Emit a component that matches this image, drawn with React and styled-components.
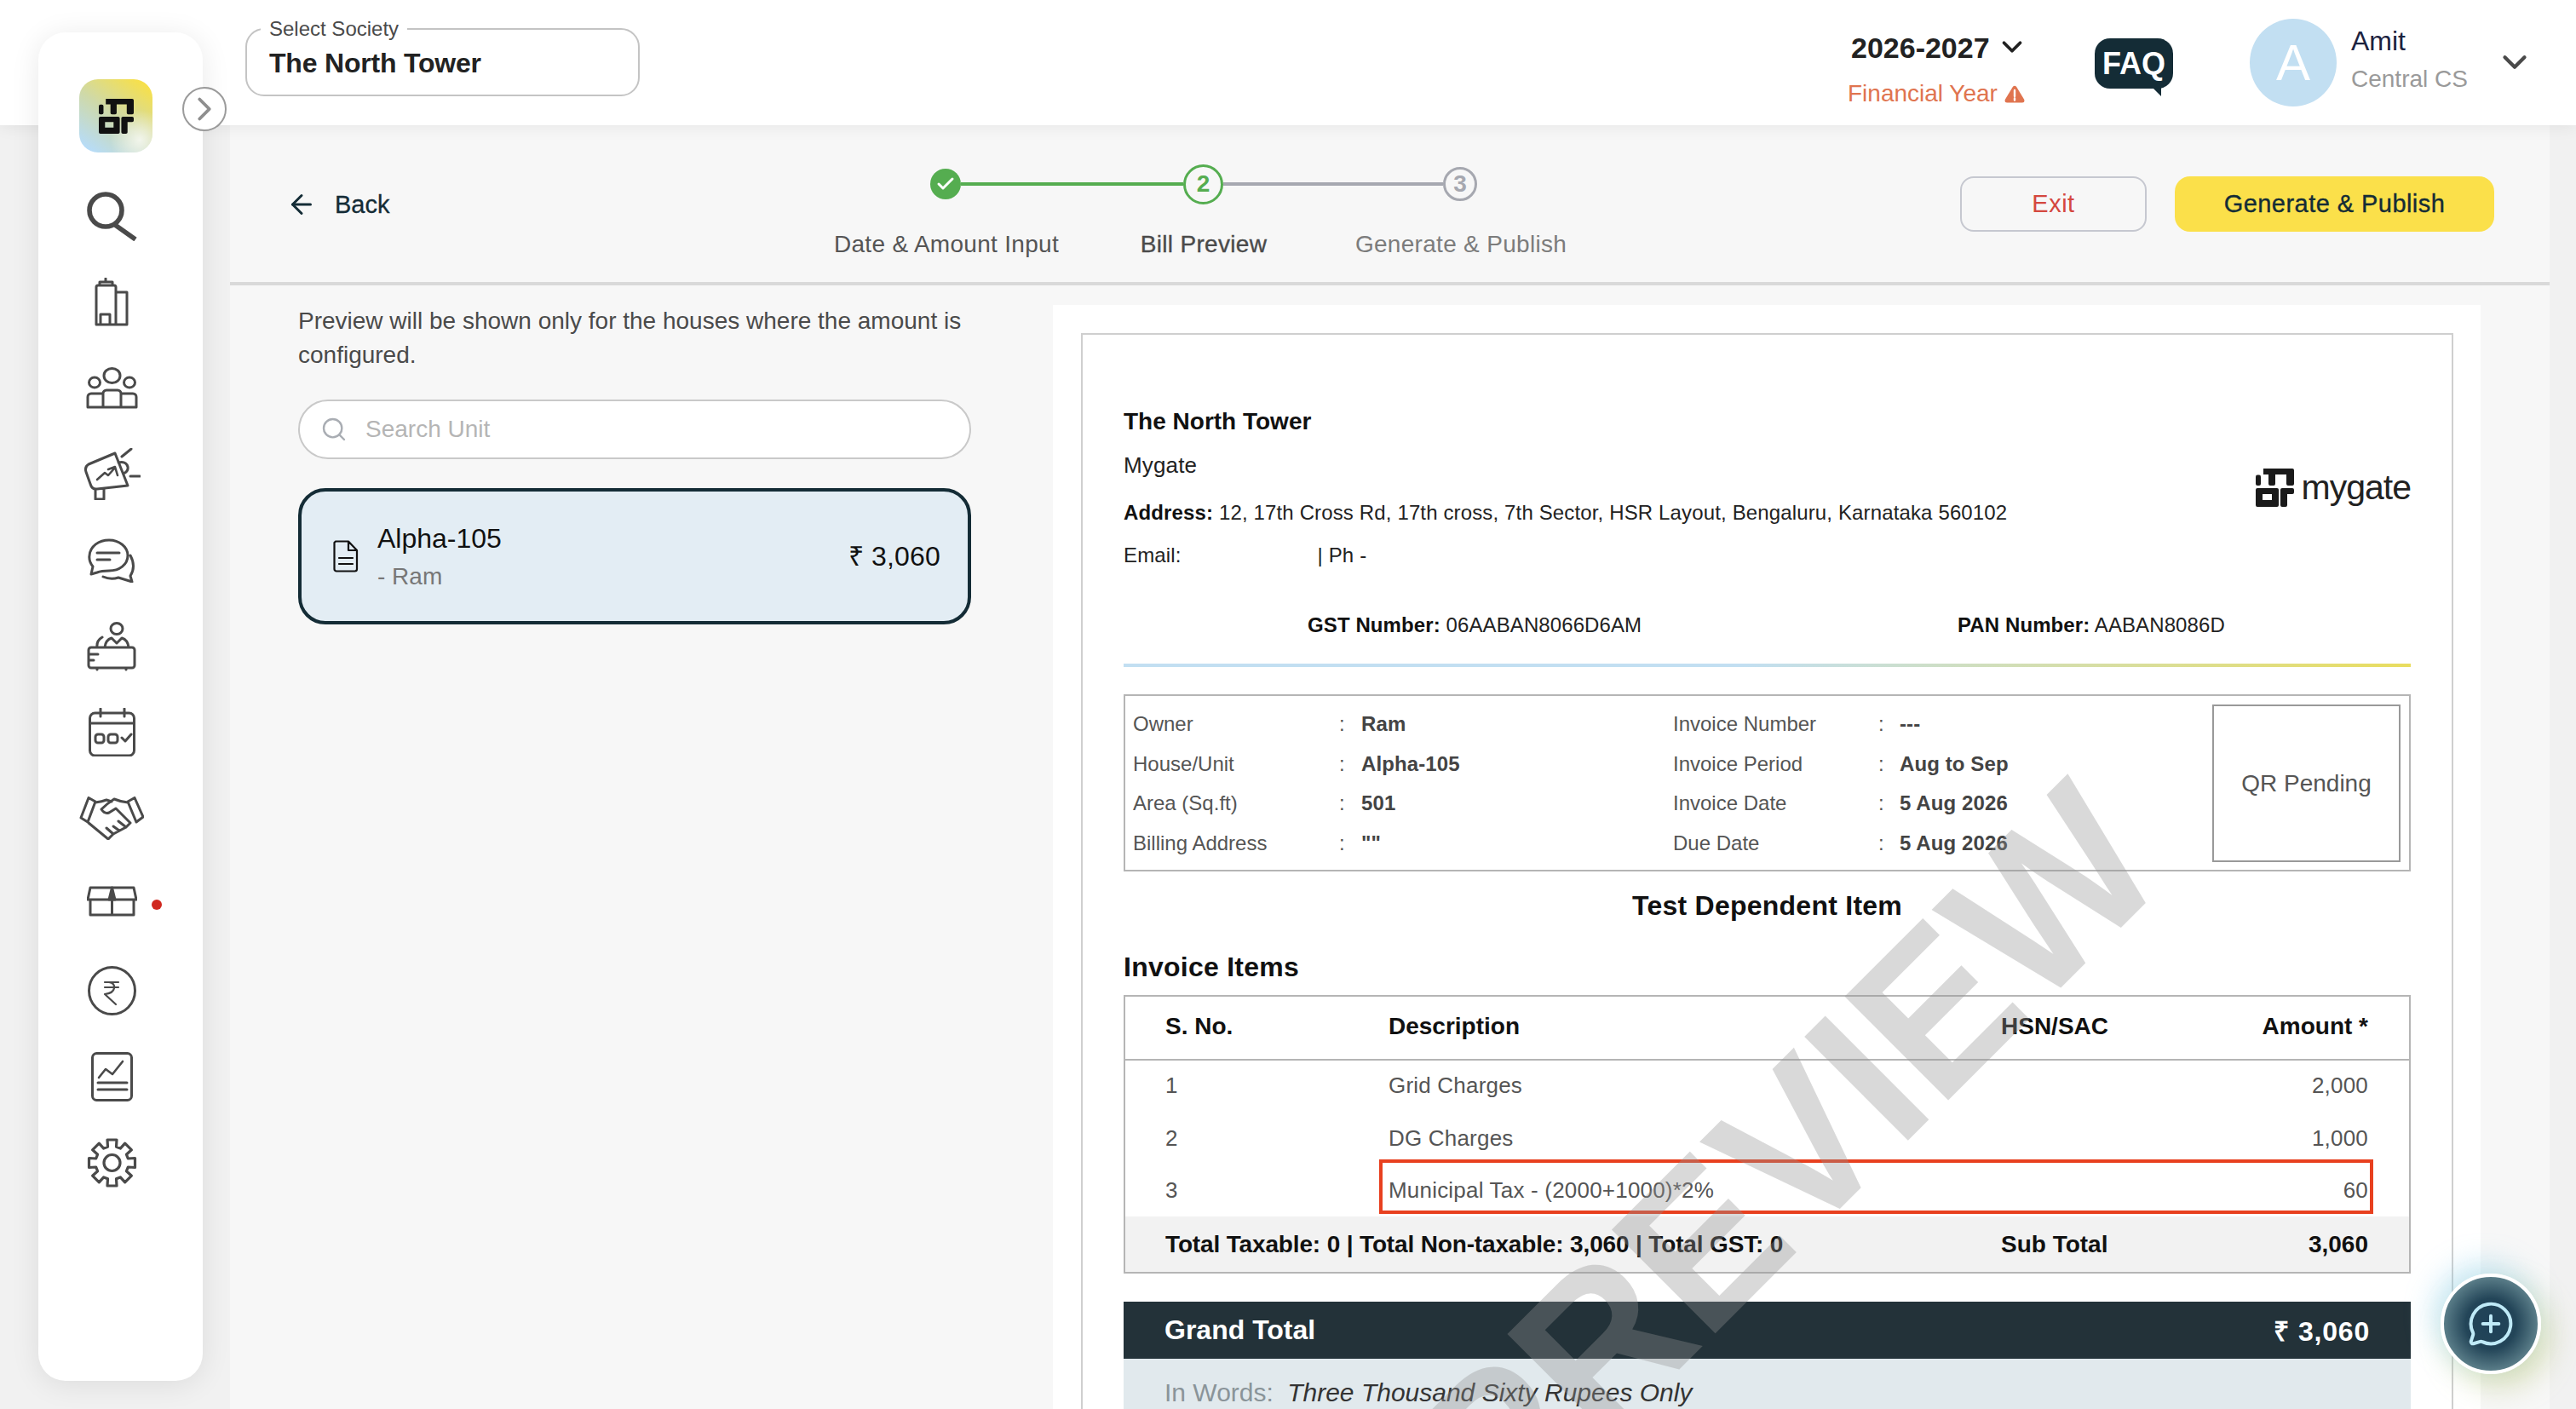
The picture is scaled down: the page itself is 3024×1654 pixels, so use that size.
import React from "react";
import styled, { createGlobalStyle } from "styled-components";
import { ArrowLeft, ChevronDown, ChevronRight, Check, Search, MessageCirclePlus } from "lucide-react";

const FONT = '"Liberation Sans", Arial, sans-serif';

const Global = createGlobalStyle`
  html, body { margin: 0; height: 100%; overflow: hidden; background: #f1f1f1; }
  #root { height: 100%; }
  * { box-sizing: border-box; }
`;

const Page = styled.div`
  position: relative; width: 100%; height: 100%; overflow: hidden;
  display: flex; flex-direction: column; font-family: ${FONT}; color: #222;
`;

/* ---------- sidebar ---------- */
const Sidebar = styled.nav`
  position: absolute; left: 45px; top: 38px; width: 193px; height: 1583px; z-index: 5;
  background: #fff; border-radius: 32px; box-shadow: 0 4px 34px rgba(0,0,0,.09);
  display: flex; flex-direction: column; padding: 55px 0 0 48px;
`;
const LogoTile = styled.div`
  width: 86px; height: 86px; border-radius: 22px; display: flex; align-items: center; justify-content: center;
  background: linear-gradient(35deg, #b7dcf7 8%, #cfd9a8 50%, #f7e04a 92%);
  position: relative; overflow: hidden; margin-bottom: 24px;
  &::after { content: ""; position: absolute; right: -20px; bottom: -20px; width: 70px; height: 70px; border-radius: 50%; background: radial-gradient(circle, rgba(255,255,255,.75), rgba(255,255,255,0) 70%); }
  svg { position: relative; z-index: 1; }
`;
const NavItem = styled.div`
  position: relative; width: 76px; height: 101px; display: flex; align-items: center; justify-content: center;
  color: #4a4a4a; padding-bottom: ${(p) => p.$lift || 0}px;
`;
const NavDot = styled.span`
  position: absolute; left: 85px; top: 45px; width: 12px; height: 12px; border-radius: 50%; background: #d0281f;
`;
const Toggle = styled.button`
  position: absolute; left: 214px; top: 102px; width: 52px; height: 52px; padding: 0; z-index: 6;
  border: 2px solid #9b9b9b; border-radius: 50%; background: #fff; color: #8e8e8e;
  display: flex; align-items: center; justify-content: center;
`;

const Ico = styled.svg`
  display: block; fill: none; stroke: currentColor; stroke-width: ${(p) => p.$w || 3}; stroke-linecap: round; stroke-linejoin: round;
`;

const gearPath = () => {
  const cx = 29.5, cy = 29, pts = [], n = 8;
  for (let i = 0; i < n; i++) {
    const a = (i / n) * Math.PI * 2 - Math.PI / 2;
    const w = 0.2, g = 0.26;
    [[27.5, -w], [27.5, w], [19.5, g], [19.5, Math.PI / 4 - g]].forEach(([r, d]) => {
      pts.push([cx + r * Math.cos(a + d), cy + r * Math.sin(a + d)]);
    });
  }
  return "M" + pts.map((p) => p[0].toFixed(1) + " " + p[1].toFixed(1)).join("L") + "Z";
};

const MarkSvg = ({ size, color = "#111" }) => (
  <svg width={size} height={size} viewBox="0 0 45 45" fill={color}>
    <rect x="0" y="7.5" width="6" height="12.5" rx="2" />
    <path d="M9 0H43a2 2 0 0 1 2 2V18a2 2 0 0 1-2 2H38a2 2 0 0 1-2-2V7H23V18a2 2 0 0 1-2 2H17a2 2 0 0 1-2-2V7H9Z" />
    <path fillRule="evenodd" d="M2 23H25a2 2 0 0 1 2 2V43a2 2 0 0 1-2 2H2a2 2 0 0 1-2-2V25a2 2 0 0 1 2-2ZM8 30V37H19V30Z" />
    <path d="M31 23H43a2 2 0 0 1 2 2V28a2 2 0 0 1-2 2H37V43a2 2 0 0 1-2 2H31a2 2 0 0 1-2-2V25a2 2 0 0 1 2-2Z" />
  </svg>
);

const navIcons = [
  <Ico key="s" width="59" height="58" viewBox="0 0 59 58" $w={5.6}>
    <circle cx="22" cy="22" r="19" /><path d="M33 39L57 56" strokeLinecap="butt" />
  </Ico>,
  <Ico key="b" width="40" height="57" viewBox="0 0 40 57">
    <path d="M2 55V11a2 2 0 0 1 2-2H23a2 2 0 0 1 2 2V55M25 17H38V55H2M6 9V5H21V9M13 5V1M7 55V43H18V55" />
  </Ico>,
  <Ico key="p" width="61" height="49" viewBox="0 0 61 49">
    <ellipse cx="30.500" cy="10" rx="9.500" ry="8.500" /><ellipse cx="10" cy="18" rx="6.500" ry="6" /><ellipse cx="51" cy="18" rx="6.500" ry="6" />
    <path d="M20 47V31a4 4 0 0 1 4-4H37a4 4 0 0 1 4 4V47M20 31H6a4 4 0 0 0-4 4V47H59V35a4 4 0 0 0-4-4H41" />
  </Ico>,
  <Ico key="m" width="67" height="61" viewBox="0 0 67 61">
    <path d="M37 6L6 19Q1 22 3 28L8 42Q10 49 16 48L52 44ZM41 17Q50 15 52 22Q53 27 47 30M14 49V60H24V48M45 10L56 1M55 33H66" />
    <path d="M16 37L25 29L29 32L37 23M29 25L37 22L40 32" strokeWidth="2.600" />
  </Ico>,
  <Ico key="c" width="56" height="52" viewBox="0 0 56 52">
    <path d="M4 42L6 33Q1 27 2 20C3 9 13 2 25 2C37 2 47 10 47 20C47 31 37 38 25 38Q16 38 11 40ZM11 17H37M11 25H26M18 45Q27 49 36 46L52 51L50 44Q57 33 50 20" />
  </Ico>,
  <Ico key="r" width="58" height="58" viewBox="0 0 58 58">
    <ellipse cx="35" cy="8" rx="7" ry="6.500" />
    <path d="M21 30Q22 21 29 19L35 25L41 19Q48 21 49 30M12 30Q11 22 18 18M5 30H53a3 3 0 0 1 3 3V51a3 3 0 0 1-3 3H5a3 3 0 0 1-3-3V33a3 3 0 0 1 3-3ZM2 38H13M2 45H8M12 55V56M46 55V56" />
  </Ico>,
  <Ico key="d" width="55" height="57" viewBox="0 0 55 57">
    <rect x="1.500" y="6" width="52" height="50" rx="6" /><path d="M1.500 18H53.500M14 1V10M42 1V10M39 35L43 39L50 31" />
    <rect x="8" y="31" width="10" height="10" rx="3" /><rect x="23" y="31" width="11" height="10" rx="3" />
  </Ico>,
  <Ico key="h" width="76" height="51" viewBox="0 0 76 51">
    <path d="M11 1.500L2 25L10 30L19 6ZM65 1.500L75 24L67 30L57 6ZM19 7Q27 6 32 4L38 6M57 7Q48 6 41 3Q33 8 26 15Q30 21 35 19L43 14L60 31L55 36L40 44L34 50L11 31M32 37L40 44M40 35L47 40M46 29L55 36" />
  </Ico>,
  <Ico key="x" width="59" height="36" viewBox="0 0 59 36">
    <path d="M4 2H55L58 16H1ZM4 16V34H55V16M29.500 2V34" /><path d="M29.500 2L26 16H33Z" fill="currentColor" />
  </Ico>,
  <Ico key="u" width="57" height="58" viewBox="0 0 57 58">
    <ellipse cx="28.500" cy="29" rx="27" ry="27.500" />
    <path d="M20 19H36M20 25H36M25 19Q32 20 31 26Q30 32 20 33L33 45" strokeWidth="2.200" />
  </Ico>,
  <Ico key="t" width="49" height="58" viewBox="0 0 49 58">
    <rect x="1.500" y="1.500" width="46" height="55" rx="5" />
    <path d="M9 30L17 20L25 26L37 11" strokeWidth="2.600" /><path d="M8 36H42M8 44H42" />
  </Ico>,
  <Ico key="g" width="59" height="58" viewBox="0 0 59 58" $w={3.2}>
    <path d={gearPath()} /><circle cx="29.500" cy="29" r="9.500" />
  </Ico>,
];

/* ---------- top bar ---------- */
const TopBar = styled.header`
  flex: none; height: 147px; background: #fff; position: relative; z-index: 2;
  box-shadow: 0 2px 18px rgba(0,0,0,.07);
  display: flex; align-items: flex-start; padding: 0 49px 0 288px;
`;
const SocietyField = styled.fieldset`
  margin: 24px 0 0; padding: 0 0 0 26px; width: 463px; height: 89px; border: 2px solid #c4c4c4; border-radius: 22px;
  legend { margin-left: -10px; padding: 0 10px; font-size: 24px; color: #4a4a4a; line-height: 20px; }
`;
const SocietyName = styled.div`
  font-size: 32px; font-weight: 700; color: #222; margin-top: 8px; line-height: 44px; letter-spacing: -.2px;
`;
const YearBlock = styled.div`
  margin-left: auto; width: 214px; padding-top: 38px; display: flex; flex-direction: column;
`;
const YearRow = styled.div`
  display: flex; align-items: flex-start; gap: 7px; padding-left: 4px; font-size: 34px; font-weight: 700; line-height: 36px; color: #222; height: 36px;
`;
const YearCaret = styled(ChevronDown)`margin-top: -2px; flex: none;`;
const YearHint = styled.div`
  display: flex; align-items: center; gap: 8px; margin-top: 19px; font-size: 28px; line-height: 34px; color: #e0744f; white-space: nowrap;
`;
const FaqBubble = styled.div`
  position: relative; margin: 45px 0 0 76px; width: 92px; height: 59px; border-radius: 18px; background: #142c36;
  color: #fff; font-size: 36px; font-weight: 700; display: flex; align-items: center; justify-content: center;
  &::after { content: ""; position: absolute; right: 14px; bottom: -9px; border-top: 10px solid #142c36; border-left: 10px solid transparent; }
`;
const Avatar = styled.div`
  margin: 22px 0 0 90px; width: 102px; height: 103px; border-radius: 50%; background: #c2dff2; color: #fff;
  font-size: 60px; display: flex; align-items: center; justify-content: center;
`;
const UserBlock = styled.div`
  margin: 29px 0 0 17px; width: 161px;
`;
const UserName = styled.div`font-size: 32px; line-height: 38px; color: #1c2340;`;
const UserRole = styled.div`font-size: 28px; line-height: 34px; margin-top: 9px; color: #9a9a9a;`;
const UserCaret = styled.div`margin: 50px 0 0 8px; color: #4a4a4a; display: flex;`;

/* ---------- main ---------- */
const Shell = styled.div`
  flex: 1; min-height: 0; padding: 0 31px 0 270px; display: flex;
`;
const Main = styled.main`
  flex: 1; min-width: 0; background: #f7f7f7; display: flex; flex-direction: column;
`;
const ActionBar = styled.div`
  flex: none; height: 188px; border-bottom: 4px solid #d9d9d9; display: flex; align-items: flex-start; position: relative; padding-left: 66px;
`;
const BackLink = styled.div`
  width: 624px; margin-top: 73px; display: flex; align-items: center; gap: 21px; font-size: 29px; line-height: 40px; color: #142c36;
  -webkit-text-stroke: .3px #142c36;
`;
const Stepper = styled.div`
  width: 906px; display: flex; flex-direction: column; align-items: center; margin-top: 44px;
`;
const Track = styled.div`
  display: flex; align-items: center; height: 50px;
`;
const Dot = styled.div`
  flex: none; width: ${(p) => p.$size}px; height: ${(p) => p.$size}px; border-radius: 50%;
  border: ${(p) => (p.$filled ? "0" : "3px solid " + p.$color)};
  background: ${(p) => (p.$filled ? p.$color : "transparent")};
  color: ${(p) => (p.$filled ? "#fff" : p.$color)};
  display: flex; align-items: center; justify-content: center; font-size: 28px; font-weight: 700;
`;
const Bar = styled.div`
  flex: none; width: ${(p) => p.$w}px; height: 4px; background: ${(p) => p.$color};
`;
const StepLabels = styled.div`
  display: grid; grid-template-columns: repeat(3, 302px); margin-top: 28px; text-align: center;
`;
const StepLabel = styled.div`
  font-size: 28px; line-height: 36px; white-space: nowrap; letter-spacing: .3px; color: ${(p) => p.$color};
  -webkit-text-stroke: ${(p) => (p.$medium ? ".35px " + p.$color : "0")};
`;
const Actions = styled.div`
  margin-left: auto; margin-right: 65px; margin-top: 60px; display: flex; gap: 33px;
`;
const ExitButton = styled.button`
  width: 219px; height: 65px; border: 2px solid #c6c8d0; border-radius: 16px; background: transparent;
  color: #d4483f; font: 29px ${FONT}; letter-spacing: .5px;
`;
const PublishButton = styled.button`
  width: 375px; height: 65px; border: 0; border-radius: 18px; background: #fbe04a; color: #142c36; font: 29px ${FONT}; letter-spacing: .45px;
  -webkit-text-stroke: .35px #142c36;
`;

const Columns = styled.div`
  flex: 1; min-height: 0; display: flex; align-items: flex-start; padding: 0 81px 0 80px; gap: 96px;
`;
const LeftPane = styled.section`
  width: 790px; flex: none; padding-top: 22px;
`;
const Note = styled.p`
  margin: 0; font-size: 28px; line-height: 40px; color: #4a4a4a;
`;
const SearchBox = styled.div`
  margin-top: 32px; height: 70px; border: 2px solid #c9c9c9; border-radius: 35px; background: #fff;
  display: flex; align-items: center; gap: 21px; padding-left: 24px; color: #a9adb3; font-size: 28px;
  span { color: #b5b5b5; }
`;
const UnitCard = styled.div`
  margin-top: 34px; height: 160px; border: 4px solid #142c36; border-radius: 32px; background: #e3edf4;
  display: flex; align-items: center; padding: 0 32px 0 37px; gap: 22px;
`;
const UnitText = styled.div`flex: 1;`;
const UnitName = styled.div`font-size: 32px; line-height: 40px; color: #111;`;
const UnitOwner = styled.div`font-size: 28px; line-height: 36px; margin-top: 7px; color: #777;`;
const UnitAmount = styled.div`font-size: 32px; color: #111; padding-bottom: 3px; letter-spacing: .2px;`;

/* ---------- invoice ---------- */
const InvoicePane = styled.section`
  flex: 1; align-self: stretch; min-width: 0; margin-top: 23px; padding: 33px 32px 0 33px; background: #fff; overflow: hidden;
`;
const Sheet = styled.article`
  position: relative; height: 1850px; border: 2px solid #cfcfcf; padding: 82px 48px 0;
`;
const Letterhead = styled.div`display: flex; justify-content: space-between; align-items: flex-start;`;
const OrgName = styled.div`font-size: 28px; font-weight: 700; line-height: 40px; color: #111;`;
const OrgLine = styled.div`
  font-size: ${(p) => p.$size || 24}px; line-height: 40px; margin-top: ${(p) => p.$mt}px; color: #222; white-space: nowrap; letter-spacing: .14px;
  b { color: #111; }
`;
const EmailGap = styled.span`display: inline-block; width: 160px;`;
const Brand = styled.div`
  margin-top: 75px; display: flex; align-items: center; gap: 9px; height: 45px;
`;
const BrandWord = styled.span`font-size: 41px; line-height: 45px; color: #222; letter-spacing: -1px;`;
const TaxRow = styled.div`
  margin-top: 42px; padding-left: 216px; display: grid; grid-template-columns: 763px 1fr; font-size: 24px; line-height: 40px; color: #222; letter-spacing: .1px;
  b { color: #111; }
`;
const Rule = styled.div`
  margin-top: 25px; height: 4px; background: linear-gradient(90deg, #c2dff2 0%, #c2dff2 48%, #e9dd5f 100%);
`;
const InfoBox = styled.div`
  margin-top: 32px; height: 208px; border: 2px solid #b5b5b5; padding: 10px 10px 0 9px; display: flex; align-items: flex-start;
`;
const InfoGrid = styled.div`
  flex: 1; display: grid; grid-template-columns: 242px 26px 366px 241px 25px 1fr; grid-auto-rows: 46.5px; align-items: center; font-size: 24px; color: #555;
`;
const InfoValue = styled.div`font-weight: 700; color: #444; letter-spacing: .1px;`;
const QrBox = styled.div`
  flex: none; width: 221px; height: 185px; border: 2px solid #999; display: flex; align-items: center; justify-content: center; font-size: 28px; color: #555;
`;
const ItemTitle = styled.h2`
  margin: 20px 0 0; font-size: 32px; line-height: 40px; font-weight: 700; color: #111; text-align: center; letter-spacing: .25px;
`;
const ItemsHeading = styled.h3`
  margin: 32px 0 13px; font-size: 32px; line-height: 40px; font-weight: 700; color: #111; letter-spacing: .25px;
`;
const ItemsTable = styled.div`
  border: 2px solid #b5b5b5;
`;
const TableRow = styled.div`
  position: relative; display: grid; grid-template-columns: 262px 719px 1fr 200px; align-items: center; padding: 0 48px ${(p) => p.$pb || 0}px 47px;
  height: ${(p) => p.$h}px; font-size: ${(p) => p.$size || 26}px; color: ${(p) => p.$color || "#555"};
  font-weight: ${(p) => p.$weight || 400}; background: ${(p) => p.$bg || "transparent"}; letter-spacing: ${(p) => p.$ls || ".2px"};
  border-bottom: ${(p) => (p.$line ? "2px solid #b5b5b5" : "0")};
`;
const RightCell = styled.div`text-align: right;`;
const TotalsNote = styled.div`grid-column: 1 / span 2; white-space: nowrap; letter-spacing: -.15px;`;
const Highlight = styled.div`
  position: absolute; left: 298px; right: 42px; top: -6px; height: 64px; border: 4px solid #e8401f;
`;
const GrandTotal = styled.div`
  margin-top: 33px; height: 67px; background: #233239; color: #fff; font-size: 32px; font-weight: 700;
  display: flex; align-items: center; justify-content: space-between; padding: 0 48px;
`;
const GrandAmount = styled.span`letter-spacing: .8px;`;
const InWords = styled.div`
  height: 110px; background: #e1e9ed; padding: 20px 48px; font-size: 30px; line-height: 40px; color: #8a9499;
  em { color: #333; margin-left: 8px; }
`;
const Watermark = styled.div`
  position: absolute; left: calc(50% + 22px); top: 967px; transform: translate(-50%, -50%) rotate(-45deg) scaleX(.96);
  font-size: 250px; font-weight: 700; line-height: 1; white-space: nowrap; color: rgba(146,146,146,.35); pointer-events: none;
`;
const Fab = styled.button`
  position: absolute; left: 2865px; top: 1495px; width: 118px; height: 118px; padding: 0; z-index: 8; border-radius: 50%; border: 4px solid #fff;
  background: radial-gradient(circle at 50% 50%, #1f4158 0%, #234558 38%, #5c7f8a 72%, #6f8f86 100%);
  box-shadow: -8px -12px 34px rgba(120,200,235,.4), 10px 14px 34px rgba(170,185,90,.4);
  color: #bfeaf7; display: flex; align-items: center; justify-content: center;
`;

const info = [
  ["Owner", "Ram", "Invoice Number", "---"],
  ["House/Unit", "Alpha-105", "Invoice Period", "Aug to Sep"],
  ["Area (Sq.ft)", "501", "Invoice Date", "5 Aug 2026"],
  ["Billing Address", '""', "Due Date", "5 Aug 2026"],
];
const items = [
  ["1", "Grid Charges", "2,000"],
  ["2", "DG Charges", "1,000"],
  ["3", "Municipal Tax - (2000+1000)*2%", "60"],
];

export default function App() {
  return (
    <Page>
      <Global />
      <Sidebar>
        <LogoTile><MarkSvg size={41} /></LogoTile>
        {navIcons.map((icon, i) => (
          <NavItem key={i} $lift={i === 8 ? 8 : 0}>{icon}{i === 8 && <NavDot />}</NavItem>
        ))}
      </Sidebar>
      <Toggle><ChevronRight size={46} strokeWidth={2} /></Toggle>

      <TopBar>
        <SocietyField>
          <legend>Select Society</legend>
          <SocietyName>The North Tower</SocietyName>
        </SocietyField>
        <YearBlock>
          <YearRow>2026-2027<YearCaret size={38} strokeWidth={2.4} /></YearRow>
          <YearHint>Financial Year
            <svg width="24" height="21" viewBox="0 0 24 21">
              <path d="M9.800 2Q12 -0.500 14.200 2L23 16.500Q24.500 20.500 21 20.500H3Q-.500 20.500 1 16.500Z" fill="#e0744f" />
              <path d="M12 6V13M12 15.500V17.500" stroke="#fff" strokeWidth="2.400" strokeLinecap="round" />
            </svg>
          </YearHint>
        </YearBlock>
        <FaqBubble>FAQ</FaqBubble>
        <Avatar>A</Avatar>
        <UserBlock>
          <UserName>Amit</UserName>
          <UserRole>Central CS</UserRole>
        </UserBlock>
        <UserCaret><ChevronDown size={46} strokeWidth={2.2} /></UserCaret>
      </TopBar>

      <Shell>
        <Main>
          <ActionBar>
            <BackLink><ArrowLeft size={36} strokeWidth={2} />Back</BackLink>
            <Stepper>
              <Track>
                <Dot $size={36} $filled $color="#55ad50"><Check size={24} strokeWidth={3} /></Dot>
                <Bar $w={261} $color="#55ad50" />
                <Dot $size={47} $color="#55ad50">2</Dot>
                <Bar $w={258} $color="#a6a8b0" />
                <Dot $size={40} $color="#a6a8b0">3</Dot>
              </Track>
              <StepLabels>
                <StepLabel $color="#555">Date &amp; Amount Input</StepLabel>
                <StepLabel $color="#4a4a4a" $medium>Bill Preview</StepLabel>
                <StepLabel $color="#7c7c7c">Generate &amp; Publish</StepLabel>
              </StepLabels>
            </Stepper>
            <Actions>
              <ExitButton>Exit</ExitButton>
              <PublishButton>Generate &amp; Publish</PublishButton>
            </Actions>
          </ActionBar>

          <Columns>
            <LeftPane>
              <Note>Preview will be shown only for the houses where the amount is configured.</Note>
              <SearchBox><Search size={32} strokeWidth={1.8} /><span>Search Unit</span></SearchBox>
              <UnitCard>
                <svg width="30" height="38" viewBox="0 0 30 38" fill="none" stroke="#111" strokeWidth="2.200" strokeLinejoin="round" strokeLinecap="round">
                  <path d="M3 1.500H18L28 12V34a2.500 2.500 0 0 1-2.500 2.500H4A2.500 2.500 0 0 1 1.500 34V3ZM18 1.500V12H28M7 21H23M7 28H23" />
                </svg>
                <UnitText>
                  <UnitName>Alpha-105</UnitName>
                  <UnitOwner>- Ram</UnitOwner>
                </UnitText>
                <UnitAmount>₹ 3,060</UnitAmount>
              </UnitCard>
            </LeftPane>

            <InvoicePane>
              <Sheet>
                <Letterhead>
                  <div>
                    <OrgName>The North Tower</OrgName>
                    <OrgLine $size={26} $mt={11}>Mygate</OrgLine>
                    <OrgLine $mt={16}><b>Address:</b> 12, 17th Cross Rd, 17th cross, 7th Sector, HSR Layout, Bengaluru, Karnataka 560102</OrgLine>
                    <OrgLine $mt={10}>Email:<EmailGap />| Ph -</OrgLine>
                  </div>
                  <Brand><MarkSvg size={45} color="#1a1a1a" /><BrandWord>mygate</BrandWord></Brand>
                </Letterhead>
                <TaxRow>
                  <div><b>GST Number:</b> 06AABAN8066D6AM</div>
                  <div><b>PAN Number:</b> AABAN8086D</div>
                </TaxRow>
                <Rule />
                <InfoBox>
                  <InfoGrid>
                    {info.map((r) => (
                      <React.Fragment key={r[0]}>
                        <div>{r[0]}</div><div>:</div><InfoValue>{r[1]}</InfoValue>
                        <div>{r[2]}</div><div>:</div><InfoValue>{r[3]}</InfoValue>
                      </React.Fragment>
                    ))}
                  </InfoGrid>
                  <QrBox>QR Pending</QrBox>
                </InfoBox>
                <ItemTitle>Test Dependent Item</ItemTitle>
                <ItemsHeading>Invoice Items</ItemsHeading>
                <ItemsTable>
                  <TableRow $h={75} $pb={3} $size={28} $weight={700} $color="#111" $ls="0" $line>
                    <div>S. No.</div><div>Description</div><div>HSN/SAC</div><RightCell>Amount *</RightCell>
                  </TableRow>
                  {items.map((r, i) => (
                    <TableRow key={r[0]} $h={61} $pb={i === 0 ? 2 : 0}>
                      <div>{r[0]}</div><div>{r[1]}</div><div />
                      <RightCell>{r[2]}</RightCell>
                      {i === 2 && <Highlight />}
                    </TableRow>
                  ))}
                  <TableRow $h={65} $size={28} $weight={700} $color="#111" $bg="#f2f2f2" $ls="0">
                    <TotalsNote>Total Taxable: 0 | Total Non-taxable: 3,060 | Total GST: 0</TotalsNote>
                    <div>Sub Total</div><RightCell>3,060</RightCell>
                  </TableRow>
                </ItemsTable>
                <GrandTotal><span>Grand Total</span><GrandAmount>₹ 3,060</GrandAmount></GrandTotal>
                <InWords>In Words: <em>Three Thousand Sixty Rupees Only</em></InWords>
                <Watermark>PREVIEW</Watermark>
              </Sheet>
            </InvoicePane>
          </Columns>
        </Main>
      </Shell>
      <Fab><MessageCirclePlus size={56} strokeWidth={1.7} /></Fab>
    </Page>
  );
}
